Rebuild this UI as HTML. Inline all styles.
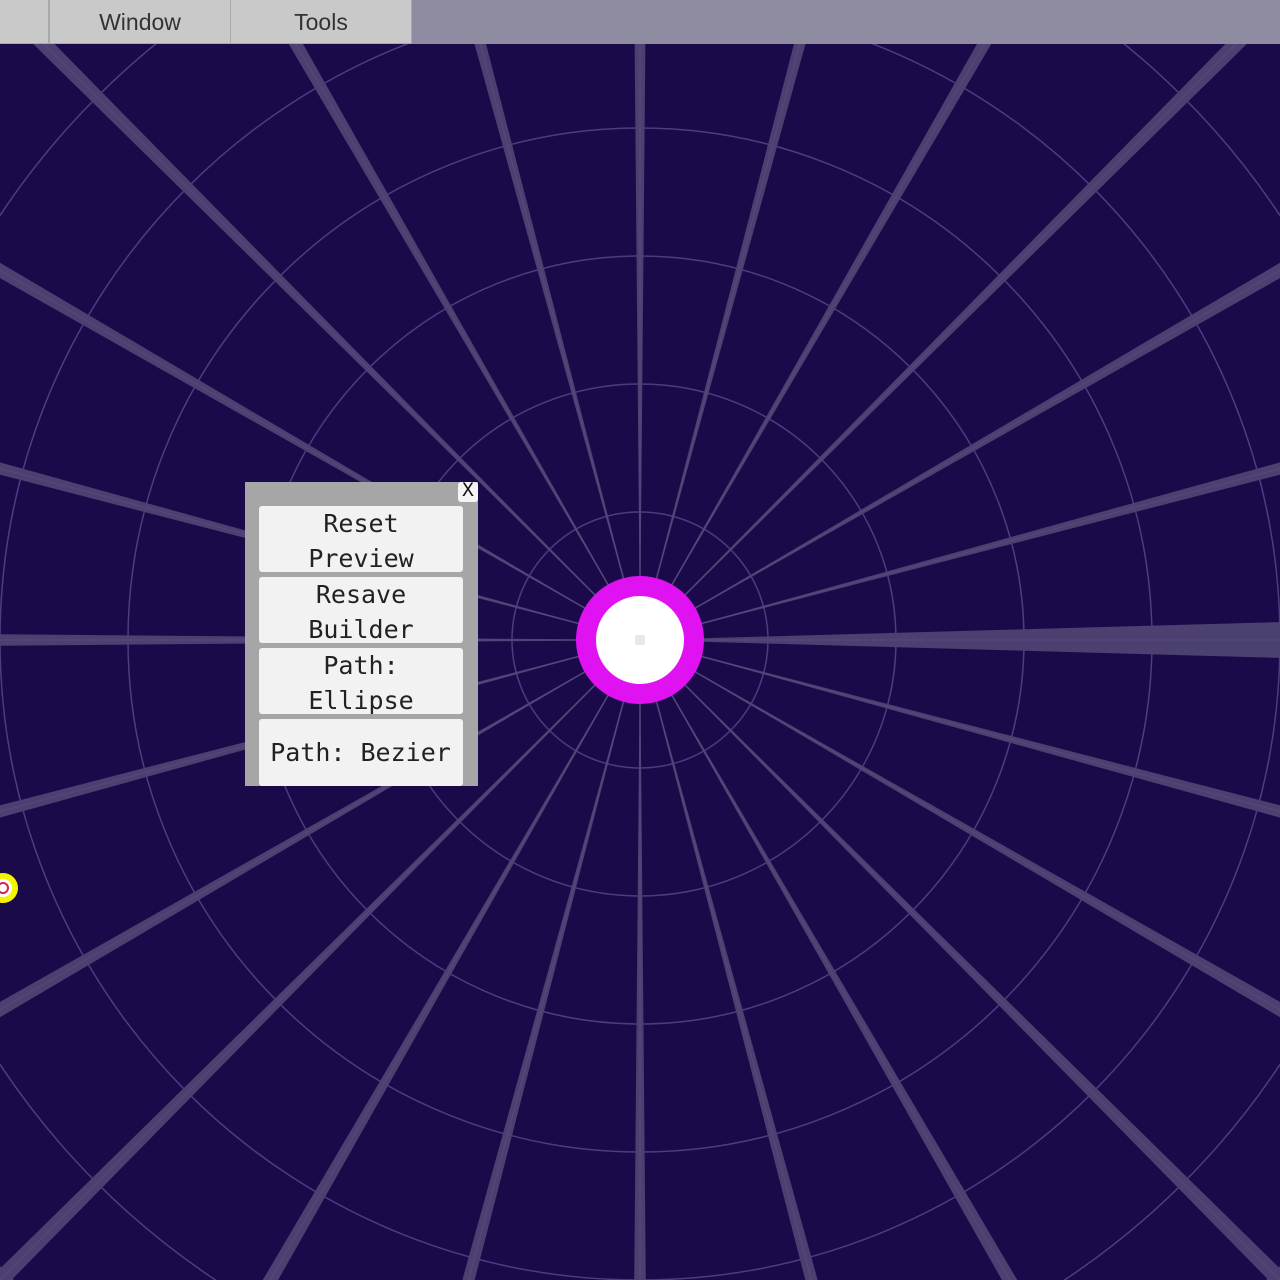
<!DOCTYPE html>
<html><head><meta charset="utf-8"><style>
html,body{margin:0;padding:0;width:1280px;height:1280px;overflow:hidden;background:#1b0a4a;position:relative}
svg{position:absolute;left:0;top:0}
.bar{position:absolute;left:0;top:0;width:1280px;height:44px;background:#8f8ba0}
.m{position:absolute;top:0;height:43px;background:#c9c9c9;border:1px solid #a9a9a9;border-top:none;font:23px "Liberation Sans",sans-serif;color:#333;text-align:center;line-height:44px}
.panel{position:absolute;left:245px;top:482px;width:233px;height:304px;background:#a6a6a6}
.x{position:absolute;left:458px;top:482px;width:20px;height:20px;background:#f4f4f4;font:20px "Liberation Mono",monospace;text-align:center;line-height:20px;color:#111;border-radius:3px}
.b{position:absolute;left:259px;width:204px;background:#f2f2f2;border-radius:3px;font:25px "DejaVu Sans Mono","Liberation Mono",monospace;color:#222;text-align:center;line-height:35px;white-space:nowrap;overflow:hidden}
</style></head><body>
<svg id="s" width="1280" height="1280" viewBox="0 0 1280 1280"></svg>
<div class="bar"></div>
<div class="m" style="left:-1px;width:48px"></div>
<div class="m" style="left:49px;width:180px">Window</div>
<div class="m" style="left:230px;width:180px">Tools</div>
<div class="panel"></div>
<div class="x">X</div>
<div class="b" style="top:506px;height:66px">Reset<br>Preview</div>
<div class="b" style="top:577px;height:66px">Resave<br>Builder</div>
<div class="b" style="top:648px;height:66px">Path:<br>Ellipse</div>
<div class="b" style="top:719px;height:67px;line-height:67px;text-indent:-1px">Path: Bezier</div>
<script>
var s=document.getElementById('s'),h='';
for(var r=128;r<=1024;r+=128)h+='<circle cx="640" cy="640" r="'+r+'" fill="none" stroke="#4b3d80" stroke-width="1.5"/>';
for(var i=0;i<24;i++){var a=i*Math.PI/12,w=(i==0)?0.028:0.009,R=1000;
var x1=640+R*Math.cos(a-w),y1=640+R*Math.sin(a-w),x2=640+R*Math.cos(a+w),y2=640+R*Math.sin(a+w);
h+='<polygon points="640,640 '+x1+','+y1+' '+x2+','+y2+'" fill="#4c4070"/>';
h+='<line x1="640" y1="640" x2="'+(640+R*Math.cos(a))+'" y2="'+(640+R*Math.sin(a))+'" stroke="#53467a" stroke-width="1.5"/>';}
h+='<circle cx="640" cy="640" r="64" fill="#e012f2"/><circle cx="640" cy="640" r="44" fill="#ffffff"/><rect x="635" y="635" width="10" height="10" fill="#e8e8e8"/>';
h+='<circle cx="3" cy="888" r="15" fill="#f4f400"/><circle cx="3" cy="888" r="9" fill="#fff"/><circle cx="3" cy="888" r="5" fill="none" stroke="#d02050" stroke-width="2"/>';
s.innerHTML=h;
</script>
</body></html>
